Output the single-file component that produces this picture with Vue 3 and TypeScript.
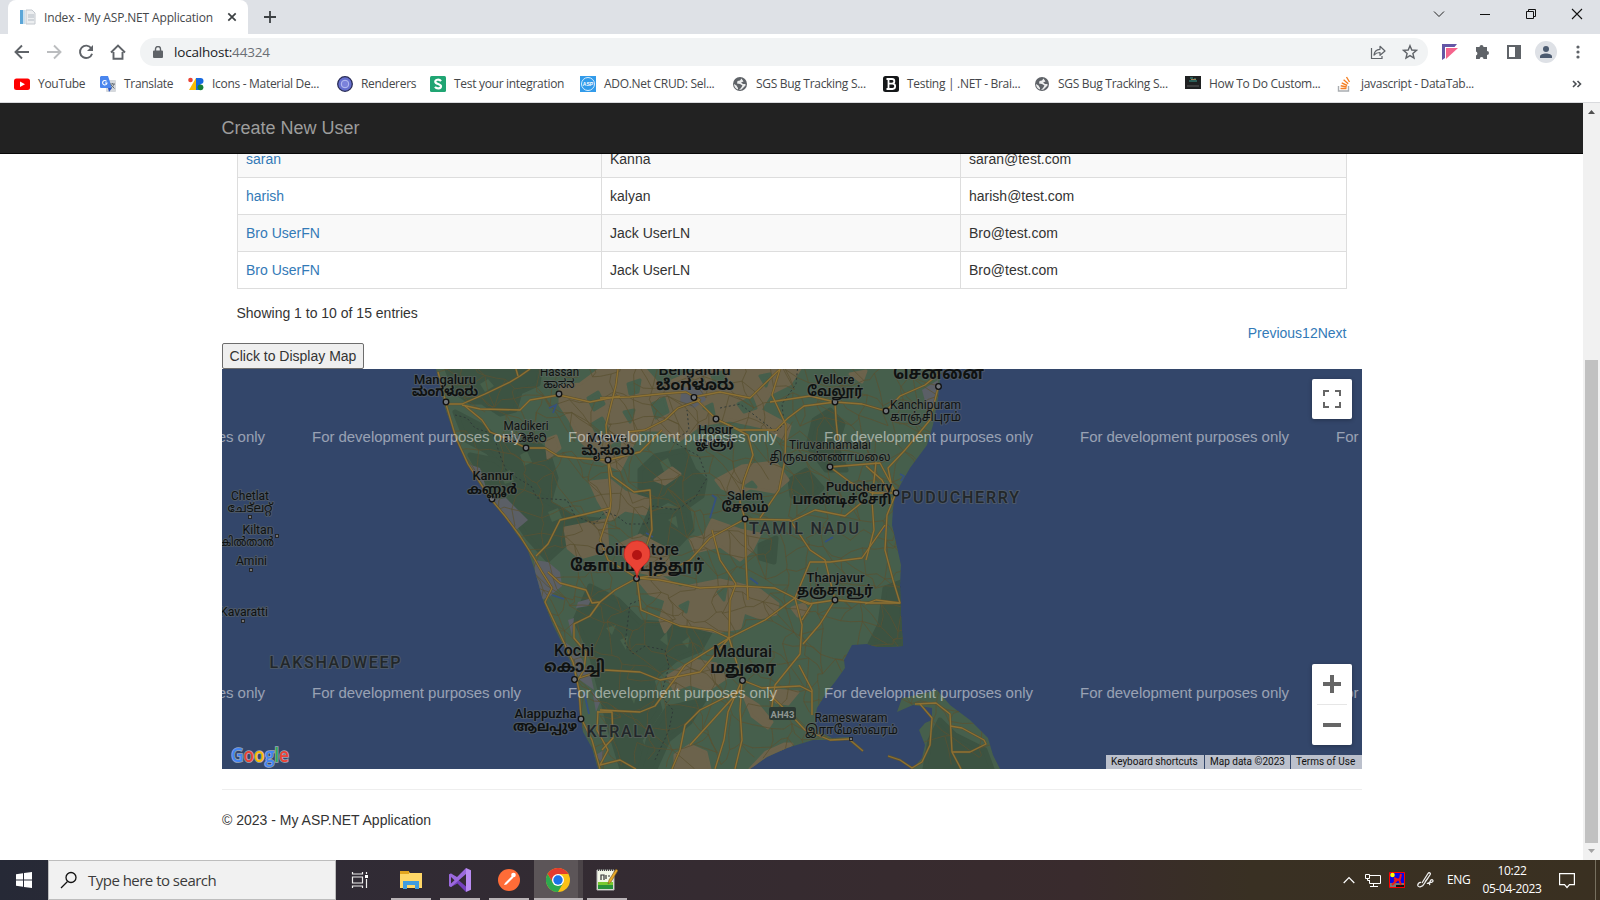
<script setup lang="ts">
interface Bookmark { icon: string; label: string; width: number }
interface Place { name: string; x: number; y: number; w: number; size: number; weight?: number; kind?: string }

const bookmarks: Bookmark[] = [
  { icon: 'youtube', label: 'YouTube', width: 86 },
  { icon: 'translate', label: 'Translate', width: 88 },
  { icon: 'material', label: 'Icons - Material De...', width: 149 },
  { icon: 'renderers', label: 'Renderers', width: 93 },
  { icon: 'sheet', label: 'Test your integration', width: 150 },
  { icon: 'asp', label: 'ADO.Net CRUD: Sel...', width: 152 },
  { icon: 'globe', label: 'SGS Bug Tracking S...', width: 151 },
  { icon: 'brain', label: 'Testing | .NET - Brai...', width: 151 },
  { icon: 'globe', label: 'SGS Bug Tracking S...', width: 151 },
  { icon: 'howto', label: 'How To Do Custom...', width: 152 },
  { icon: 'stack', label: 'javascript - DataTab...', width: 160 },
]

const users = [
  { first: 'saran', last: 'Kanna', email: 'saran@test.com' },
  { first: 'harish', last: 'kalyan', email: 'harish@test.com' },
  { first: 'Bro UserFN', last: 'Jack UserLN', email: 'Bro@test.com' },
  { first: 'Bro UserFN', last: 'Jack UserLN', email: 'Bro@test.com' },
]

const india = '436,369 440,385 444,405 450,422 458,443 468,465 480,485 492,498 503,512 515,532 527,548 534,568 538,582 542,597 545,605 553,625 563,645 573,668 577,682 580,712 583,732 592,748 598,769 750,769 767,757 787,748 813,740 850,740 849,737 832,738 818,731 815,720 817,708 827,692 835,682 845,668 844,660 852,645 867,644 877,647 890,647 903,646 901,615 900,585 901,565 895,538 892,525 893,508 895,495 902,482 910,468 927,445 933,425 938,398 941,369'
const lanka = '912,769 922,758 925,745 919,730 925,723 932,720 932,708 913,705 897,712 902,698 917,695 937,690 950,705 970,720 988,738 993,755 1000,769'

const forests = [
  '447,369 540,369 538,384 520,392 515,410 500,414 482,402 470,402 456,392',
  '455,412 480,425 500,440 530,438 548,452 556,478 550,500 532,492 510,476 488,452 466,440',
  '470,455 495,460 520,480 545,500 575,518 598,520 596,532 570,540 548,560 528,538 505,504 485,482',
  '640,470 655,456 685,450 694,470 705,480 702,496 685,508 668,500 650,510 640,496',
  '650,512 688,510 692,530 678,545 655,548 640,535',
  '590,586 618,600 640,622 668,624 710,632 700,650 675,660 652,680 660,710 640,740 650,769 622,769 610,730 600,690 590,650 575,620',
  '814,420 830,410 843,424 836,446 846,470 826,470 808,446',
  '790,480 806,470 822,488 808,502 792,496',
  '760,545 776,538 774,562 760,558',
  '885,588 901,582 903,646 870,644 880,624',
  '668,708 704,700 690,722 668,740 655,769 640,769 650,734',
  '925,769 930,740 940,720 955,735 985,750 992,769',
]
const clearings = [
  '480,384 488,379 494,386 485,392', '500,420 509,424 504,430', '520,455 527,451 532,462 524,466', '500,474 510,470 514,481 505,484',
  '548,512 558,508 562,518 552,522', '572,526 582,524 580,532', '620,640 628,636 626,650', '660,640 667,632 668,646', '682,642 690,636 688,648',
  '606,628 616,625 612,635', '630,695 638,690 634,704', '600,660 606,672 598,670', '660,462 668,458 672,468 664,472', '668,520 676,516 678,528',
]
const plains = [
  '560,386 580,384 600,369 645,369 660,386 700,369 800,369 790,384 770,394 760,410 790,426 786,440 766,428 730,420 700,425 680,440 660,430 640,430 620,470 600,460 580,440 570,420 560,405',
  '590,482 610,480 625,492 650,500 645,514 625,510 610,520 598,500',
  '546,440 556,436 560,448 548,458', '655,480 672,468 680,474 665,484',
  '716,480 742,466 775,462 788,480 774,492 750,488 738,494 722,488',
  '690,540 704,536 712,520 740,530 760,534 752,550 740,560 720,546 695,552',
  '640,582 660,576 680,588 720,580 738,584 760,590 778,604 776,614 760,618 744,612 740,628 716,632 690,626 672,622 665,632 660,620 666,600 650,594',
  '668,676 694,660 716,664 726,678 708,690 690,684 674,690',
  '775,690 798,692 788,704 776,702', '744,696 758,705 772,722 768,728 752,716',
  '675,769 675,755 690,745 706,752 710,769', '750,769 766,752 784,744 792,744 782,752 762,764',
  '565,528 606,520 608,550 580,558 568,548', '792,608 804,604 808,612 798,616', '618,545 640,535 665,548 672,575 650,574 632,570',
  '850,374 866,371 862,382',
]
const gaps = ['588,398 598,392 604,404 594,410', '628,384 640,380 638,392 630,394', '592,424 602,418 608,430 598,436', '652,404 664,398 668,412 656,418', '712,376 722,372 726,382 716,386', '738,404 752,398 756,408 744,412', '704,408 712,404 714,414', '760,376 770,374 766,386', '624,412 634,410 630,422', '612,446 620,440 618,456', '718,592 726,588 724,600', '746,486 752,482 756,487', '680,606 688,602 686,612', '640,552 648,546 650,556']
const cities = ['534,560 548,562 560,572 562,586 550,596 542,600 536,582', '490,500 506,498 520,512 528,520 516,530 504,514', '562,640 576,650 590,672 594,690 580,680', '682,388 700,384 706,400 694,408 680,402', '922,390 938,380 936,400 928,412', '592,690 600,702 596,712', '468,464 480,468 486,488', '578,602 592,598 588,606 576,608', '568,620 574,618 572,636', '594,756 604,750 602,762']

const highways = [
  '438,372 443,390 446,404 456,438 468,464 490,498 505,516 520,536 534,558 542,572 552,588 545,602 560,634 573,662 579,690 581,718 592,740 600,769',
  '446,404 462,404 485,394 510,382 520,376 530,369', '462,405 480,409 520,410 530,400 559,395 590,402 620,396',
  '465,406 482,420 490,432 510,440 526,448 545,448 558,456 576,458 608,460 640,452 662,430',
  '518,376 516,369', '618,369 616,385 606,425 608,460 611,500 610,510 600,540 608,560 637,578',
  '610,508 586,514 560,520 548,544 536,556', '600,398 630,397 660,394 686,392 700,400 678,408 665,420 645,430 628,432',
  '694,397 720,392 750,398 780,369', '694,397 716,419 748,435 753,455 744,480 740,502 745,519 746,560 748,600',
  '716,419 740,430 776,430 788,418 804,406 835,402 862,404 886,411', '835,402 836,420 838,440', '770,402 810,396 835,402',
  '780,369 772,395 786,425 785,460 779,490 760,518', '886,411 900,396 925,385 941,372', '938,388 930,420 905,450 888,468 893,493',
  '830,467 880,463 896,493', '745,519 790,520 810,550 825,560 835,600', '745,519 710,538 690,560 660,575 637,578',
  '608,460 612,476 634,492 650,490 652,530 645,550 637,578', '830,467 850,482 872,493 896,493', '790,522 815,510 845,516 865,500',
  '896,493 887,515 885,550 893,580 900,603 870,603 835,600 808,604 795,598 775,588 738,586 700,588 660,580 637,578',
  '885,525 862,558 830,562 810,562 795,598 802,625 800,654 775,685 770,720',
  '637,578 641,610 680,626 712,630 729,638 742,680', '729,638 730,600 736,584 720,560 712,530',
  '729,638 765,620 795,598', '800,600 812,604 802,620', '835,600 820,624 803,644', '865,604 876,600 900,603',
  '742,680 762,688 800,686 812,692', '799,665 812,690 812,715', '742,680 728,712 724,740 715,769',
  '742,680 740,710 742,740 735,769', '770,695 790,714 805,730 830,740 850,739',
  '579,678 604,670 640,672 660,680 700,672 729,638', '600,710 640,712 655,706 685,665 729,638', '690,745 740,690',
  '637,578 615,590 600,602 592,603 586,590 560,583 548,572', '600,602 590,616 574,624 574,638 586,652 584,670 578,680',
  '598,711 597,730 608,750 600,765 620,760 636,769', '597,712 612,712 613,738 602,750', '740,690 700,710 685,725 680,750 672,769',
  '915,704 936,703 950,714 952,752 961,769', '950,726 962,728 984,740 986,744 970,752 952,752', '920,704 932,718 930,745 922,762 912,768 900,760 888,756',
  '850,740 863,751', '866,466 882,480 892,500', '876,462 872,500 874,530 866,560',
]

function noise(n: number): number {
  const v = Math.sin(n * 127.1 + 11.7) * 43758.5453
  return v - Math.floor(v)
}
const columns = 30
const rows = 21
const step = 19
function node(c: number, r: number): [number, number] {
  const i = r * columns + c
  return [425 + c * step + (noise(i) - 0.5) * 17, 362 + r * step + (noise(i + 999) - 0.5) * 17]
}
function link(a: [number, number], b: [number, number], s: number): string {
  const mx = (a[0] + b[0]) / 2 + (noise(s) - 0.5) * 7
  const my = (a[1] + b[1]) / 2 + (noise(s + 51) - 0.5) * 7
  return `M${a[0].toFixed(1)} ${a[1].toFixed(1)}L${mx.toFixed(1)} ${my.toFixed(1)}L${b[0].toFixed(1)} ${b[1].toFixed(1)}`
}
let minorRoads = ''
for (let r = 0; r < rows; r++) {
  for (let c = 0; c < columns; c++) {
    const i = r * columns + c
    if (noise(i + 7) > 0.25) minorRoads += link(node(c, r), node(c + 1, r), i)
    if (noise(i + 77) > 0.3) minorRoads += link(node(c, r), node(c, r + 1), i + 300)
    if (noise(i + 777) > 0.65) minorRoads += link(node(c, r), node(c + 1, r + 1), i + 600)
  }
}

const places: Place[] = [
  { name: 'Mangaluru', x: 445, y: 383.5, w: 62, size: 13 }, { name: 'ಮಂಗಳೂರು', x: 445, y: 396, w: 66, size: 13.5, weight: 700 },
  { name: 'Hassan', x: 559.5, y: 376, w: 39, size: 12, weight: 400 }, { name: 'ಹಾಸನ', x: 559, y: 388, w: 31, size: 12.5, weight: 400 },
  { name: 'Madikeri', x: 526, y: 430, w: 45, size: 12, weight: 400 }, { name: 'ಮಡಿಕೇರಿ', x: 525, y: 442, w: 43, size: 12.5, weight: 400 },
  { name: 'Mysuru', x: 607, y: 442, w: 40, size: 13 }, { name: 'ಮೈಸೂರು', x: 608, y: 455, w: 53, size: 13.5, weight: 700 },
  { name: 'Kannur', x: 493, y: 480, w: 41, size: 13 }, { name: 'കണ്ണൂർ', x: 492, y: 493.5, w: 50, size: 13.5, weight: 700 },
  { name: 'Chetlat', x: 250, y: 500, w: 38, size: 12, weight: 400 }, { name: 'ചേട്ലറ്റ്', x: 250, y: 512, w: 45, size: 12.5, weight: 400 },
  { name: 'Kiltan', x: 258, y: 534, w: 31, size: 12, weight: 400 }, { name: 'കിൽതാൻ', x: 247, y: 546, w: 54, size: 12.5, weight: 400 },
  { name: 'Amini', x: 251.5, y: 565, w: 31, size: 12, weight: 400 }, { name: 'Kavaratti', x: 244, y: 616, w: 48, size: 12, weight: 400 },
  { name: 'LAKSHADWEEP', x: 335, y: 667.5, w: 131, size: 16, kind: 'region' },
  { name: 'Bengaluru', x: 694.5, y: 374.5, w: 72, size: 15.5 }, { name: 'ಬೆಂಗಳೂರು', x: 695, y: 390, w: 78, size: 15.5, weight: 700 },
  { name: 'Hosur', x: 715.5, y: 433.5, w: 35, size: 13 }, { name: 'ஓசூர்', x: 715, y: 447, w: 40, size: 13.5, weight: 700 },
  { name: 'Vellore', x: 834.5, y: 383.5, w: 40, size: 13 }, { name: 'வேலூர்', x: 835, y: 396, w: 56, size: 13.5, weight: 700 },
  { name: 'சென்னை', x: 938.5, y: 379, w: 91, size: 17, weight: 700 },
  { name: 'Kanchipuram', x: 925.5, y: 409, w: 71, size: 12, weight: 400 }, { name: 'காஞ்சிபுரம்', x: 925.5, y: 421, w: 71, size: 12.5, weight: 400 },
  { name: 'Tiruvannamalai', x: 830, y: 449, w: 82, size: 12, weight: 400 }, { name: 'திருவண்ணாமலை', x: 830, y: 461, w: 121, size: 12.5, weight: 400 },
  { name: 'Puducherry', x: 859, y: 491, w: 66, size: 13 }, { name: 'பாண்டிச்சேரி', x: 842, y: 504, w: 99, size: 13.5, weight: 700 },
  { name: 'PUDUCHERRY', x: 960, y: 502.5, w: 118, size: 16, kind: 'region' },
  { name: 'Salem', x: 745, y: 499.500, w: 36, size: 13 }, { name: 'சேலம்', x: 745, y: 512, w: 47, size: 13.5, weight: 700 },
  { name: 'TAMIL NADU', x: 804, y: 533.5, w: 110, size: 16, kind: 'region' },
  { name: 'Coimbatore', x: 637, y: 555, w: 84, size: 16 }, { name: 'கோயம்புத்தூர்', x: 637, y: 571, w: 134, size: 16.5, weight: 700 },
  { name: 'Kochi', x: 574, y: 656, w: 40, size: 16 }, { name: 'കൊച്ചി', x: 574.5, y: 672, w: 61, size: 16.5, weight: 700 },
  { name: 'Alappuzha', x: 545.5, y: 717.5, w: 62, size: 13 }, { name: 'ആലപ്പുഴ', x: 545, y: 731, w: 64, size: 13.5, weight: 700 },
  { name: 'KERALA', x: 620.5, y: 737, w: 68, size: 16, kind: 'region' },
  { name: 'Thanjavur', x: 835.5, y: 581.5, w: 58, size: 13 }, { name: 'தஞ்சாவூர்', x: 835, y: 595, w: 76, size: 13.5, weight: 700 },
  { name: 'Madurai', x: 742.5, y: 657, w: 59, size: 16 }, { name: 'மதுரை', x: 743, y: 673, w: 66, size: 16.5, weight: 700 },
  { name: 'Rameswaram', x: 851, y: 722, w: 73, size: 12, weight: 400 }, { name: 'இராமேஸ்வரம்', x: 851.5, y: 734, w: 93, size: 12.5, weight: 400 },
]
const dots = [[446, 402], [559, 394], [526, 448], [608, 460], [492, 499], [694, 397.5], [716, 419], [835, 402], [938.5, 386.5], [886, 411], [830, 467], [896, 493], [745, 519], [636.5, 578.5], [574.5, 679.5], [581, 719], [835, 600], [742.5, 680.5]]
const islets = [[250, 517], [277, 536], [251, 570], [243, 621], [851, 739]]
const watermarks = [436, 692].flatMap((y) => [56, 312, 568, 824, 1080, 1336].map((x) => ({ x, y: y + 5.5 })))
</script>

<template>
  <div class="screen">
    <header class="tabs">
      <div class="tab">
        <svg class="favicon" width="16" height="16" viewBox="0 0 16 16"><path d="M0 1h3v14H0z" fill="#5ba6d8" /><path d="M3 1h2v14H3z" fill="#c9dfee" /><path d="M6 1h6l3 3v11H6z" fill="#eceef0" stroke="#c3c8ce" /><path d="M8 6h6M8 8h6M8 11h6" stroke="#b4bcc5" /></svg>
        <span class="tab-title">Index - My ASP.NET Application</span>
        <svg class="tab-close" width="10" height="10" viewBox="0 0 10 10"><path d="M1.3 1.3l7.4 7.4M8.7 1.3L1.3 8.7" stroke="#3c4043" stroke-width="1.7" /></svg>
      </div>
      <svg class="new-tab" width="12" height="12" viewBox="0 0 12 12"><path d="M6 0v12M0 6h12" stroke="#3c4043" stroke-width="1.8" /></svg>
      <div class="window-buttons">
        <svg width="12" height="12" viewBox="0 0 12 12"><path d="M1 3.5l5 5 5-5" fill="none" stroke="#222" /></svg>
        <svg width="12" height="12" viewBox="0 0 12 12"><path d="M1 6.5h10" stroke="#111" /></svg>
        <svg width="12" height="12" viewBox="0 0 12 12"><path d="M1.5 3.5h7v7h-7zM3.5 3V1.5h7v7H9" fill="none" stroke="#111" /></svg>
        <svg width="12" height="12" viewBox="0 0 12 12"><path d="M1 1l10 10M11 1L1 11" stroke="#111" stroke-width="1.1" /></svg>
      </div>
    </header>

    <div class="toolbar">
      <div class="nav-icons">
        <svg width="16" height="16" viewBox="0 0 16 16"><path d="M15 8H2M8 1.5L1.5 8 8 14.5" class="line dark" /></svg>
        <svg width="16" height="16" viewBox="0 0 16 16"><path d="M1 8h13M8 1.5L14.5 8 8 14.5" class="line light" /></svg>
        <svg width="16" height="16" viewBox="0 0 16 16"><path d="M13.3 4.3A6.2 6.2 0 1 0 14.1 9.8" class="line dark" /><path d="M15 1v6H9z" fill="#5f6368" /></svg>
        <svg width="16" height="16" viewBox="0 0 16 16"><path d="M1 8.5L8 1.5l7 7M3.5 8v6.700h9V8" class="line dark" /></svg>
      </div>
      <div class="omnibox">
        <svg width="10" height="12" viewBox="0 0 10 12"><path d="M1 4.5h8a1 1 0 0 1 1 1V11a1 1 0 0 1-1 1H1a1 1 0 0 1-1-1V5.500a1 1 0 0 1 1-1z" fill="#5f6368" /><path d="M2.500 5V3a2.500 2.500 0 0 1 5 0v2" fill="none" stroke="#5f6368" stroke-width="1.400" /></svg>
        <span class="url">localhost:<span class="port">44324</span></span>
        <svg class="share" width="16" height="16" viewBox="0 0 16 16"><path d="M1.500 4v10.500H12V12" fill="none" stroke="#5f6368" stroke-width="1.200" /><path d="M4 11c.3-3.500 2.500-5.500 6-5.700V2.300L15 7l-5 4.300V8.500c-2.700 0-4.500.8-6 2.500z" fill="none" stroke="#5f6368" stroke-width="1.200" stroke-linejoin="round" /></svg>
        <svg width="16" height="16" viewBox="0 0 16 16"><path d="M8 1.700l1.800 4.300 4.700.4-3.600 3 1.100 4.600L8 11.600 4 14l1.100-4.600-3.600-3L6.200 6z" fill="none" stroke="#5f6368" stroke-width="1.400" stroke-linejoin="miter" /></svg>
      </div>
      <div class="extensions">
        <svg width="16" height="16" viewBox="0 0 16 16"><path d="M0 0h15l-2.500 3H3v11l-3 2z" fill="#6457a6" /><path d="M4 4h12L4 15z" fill="#f5648c" /></svg>
        <svg width="16" height="16" viewBox="0 0 16 16"><path d="M5.500 3a2 2 0 0 1 4 0H13v4a2 2 0 0 1 0 4v4H9.500a1.900 1.900 0 0 0-3.800 0H2v-3.600a2 2 0 0 0 0-3.800V3z" fill="#5f6368" /></svg>
        <svg width="16" height="16" viewBox="0 0 16 16"><path d="M1 1h14v14H1zM3 3v10h6V3z" fill="#5f6368" fill-rule="evenodd" /></svg>
        <svg class="avatar" width="22" height="22" viewBox="0 0 22 22"><circle cx="11" cy="11" r="11" fill="#dee1e6" /><circle cx="11" cy="8" r="3" fill="#4c5b70" /><path d="M5 17v-1.500c0-4 12-4 12 0V17z" fill="#4c5b70" /></svg>
        <svg class="menu-dots" width="4" height="16" viewBox="0 0 4 16"><g fill="#5f6368"><circle cx="2" cy="3" r="1.600" /><circle cx="2" cy="8" r="1.600" /><circle cx="2" cy="13" r="1.600" /></g></svg>
      </div>
    </div>

    <nav class="bookmarks">
      <div v-for="(b, i) in bookmarks" :key="i" class="bookmark" :style="{ width: b.width + 'px' }">
        <svg width="16" height="16" viewBox="0 0 16 16">
          <template v-if="b.icon === 'youtube'"><rect y="2.500" width="16" height="11.500" rx="2.500" fill="#f00" /><path d="M6 5.500v5.500l5-2.750z" fill="#fff" /></template>
          <template v-else-if="b.icon === 'translate'"><rect x="6" y="4" width="10" height="12" rx="1" fill="#d5d8dc" /><path d="M1 0h7l4 12H1a1 1 0 0 1-1-1V1z" fill="#4a86ee" /><path d="M8 12h4l-3 4z" fill="#2c56c4" /><path d="M6.500 5.300A2.200 2.200 0 1 0 7 7H5" fill="none" stroke="#fff" stroke-width="1.100" /><path d="M10 8h5M12.500 7v1M14 8c-.5 2-2 3.500-3 4M11 9l3.500 3.500" stroke="#687078" fill="none" /></template>
          <template v-else-if="b.icon === 'material'"><path d="M1 14L8 2v12z" fill="#fbbc04" /><circle cx="2.500" cy="4" r="2.300" fill="#ea4335" /><path d="M8 2h4.500a3 3 0 0 1 0 6v6H8z" fill="#1769e0" /><circle cx="12.500" cy="11.300" r="2.900" fill="#188038" /></template>
          <template v-else-if="b.icon === 'renderers'"><circle cx="8" cy="8" r="7.300" fill="#6670cf" stroke="#292c56" stroke-width="1.300" /><circle cx="8" cy="8" r="3.800" fill="#7b82db" stroke="#bac0f2" /></template>
          <template v-else-if="b.icon === 'sheet'"><rect width="16" height="16" rx="1.500" fill="#20a573" /><path d="M11 5.200C9.500 3 5.300 3.300 5.300 5.700c0 2.800 5.700 1.800 5.700 4.600 0 2.600-4.400 2.800-6 .6" fill="none" stroke="#fff" stroke-width="2.200" /></template>
          <template v-else-if="b.icon === 'asp'"><rect width="16" height="16" fill="#329bea" /><circle cx="8" cy="8" r="6.500" fill="none" stroke="#d8efff" /><text x="8" y="10.200" class="asp">ASP</text></template>
          <template v-else-if="b.icon === 'globe'"><circle cx="8" cy="8" r="7" fill="#5f6368" /><path d="M9.500 2.500L8 4.500l-2.500.5L5 7.500l3 .5 2.500 1.500L9 12l-2 2 2.500-.5 4-4V8H11L9 6.500l2.500-1z" fill="#eceded" /><path d="M2 8l2.500 1.500L6 12v1.500C3.500 13 2 10.500 2 8z" fill="#eceded" /></template>
          <template v-else-if="b.icon === 'brain'"><rect width="16" height="16" rx="2.500" fill="#151719" /><path d="M5 3h4a2.300 2.300 0 0 1 0 4.700H5.500 9.500a2.600 2.600 0 0 1 0 5.300H5M5.500 3v10M3.500 3h3M3.500 13h3" fill="none" stroke="#fff" stroke-width="1.800" /></template>
          <template v-else-if="b.icon === 'howto'"><rect y="0" width="16" height="13" fill="#1f2122" /><path d="M5 2h3M9 3h2M4 5h8" stroke="#3a9e8f" /><path d="M6 3.500h5" stroke="#9a8052" /><path d="M2 10h12" stroke="#777" stroke-width=".7" /></template>
          <template v-else><path d="M1.500 10v5h10v-5" fill="none" stroke="#a9adb1" stroke-width="1.400" /><path d="M3.500 12.500h6M3.700 9.700l6 1.300M4.700 6.800l5.500 2.700M6.600 3.700l4.600 4M9.500 1l3 5" stroke="#f48024" stroke-width="1.400" /></template>
        </svg>
        <span>{{ b.label }}</span>
      </div>
      <svg class="more" width="10" height="8" viewBox="0 0 10 8"><path d="M1 1l3 3-3 3M5.500 1l3 3-3 3" fill="none" stroke="#4b4f54" stroke-width="1.600" /></svg>
    </nav>

    <div class="viewport">
      <main class="page">
        <div class="navbar"><a class="brand">Create New User</a></div>
        <div class="container">
          <div class="grid-wrap">
            <table class="users">
              <colgroup><col class="c1" /><col class="c2" /><col /></colgroup>
              <tbody>
                <tr v-for="(u, i) in users" :key="i"><td><a>{{ u.first }}</a></td><td>{{ u.last }}</td><td>{{ u.email }}</td></tr>
              </tbody>
            </table>
            <div class="info">Showing 1 to 10 of 15 entries</div>
            <div class="paging"><a>Previous</a><a>1</a><a>2</a><a>Next</a></div>
          </div>
          <button class="map-button">Click to Display Map</button>
          <div class="map">
            <svg width="1140" height="400" viewBox="222 369 1140 400">
              <defs><clipPath id="land"><polygon :points="india" /><polygon :points="lanka" /></clipPath></defs>
              <rect x="222" y="369" width="1140" height="400" fill="#33466a" />
              <g clip-path="url(#land)">
                <rect x="420" y="369" width="600" height="400" fill="#465f4c" />
                <polygon v-for="(p, i) in forests" :key="'f' + i" :points="p" fill="#3c5342" stroke="#3c5342" stroke-width="5" stroke-linejoin="round" />
                <polygon v-for="(p, i) in clearings" :key="'k' + i" :points="p" fill="#47604a" />
                <polygon v-for="(p, i) in plains" :key="'p' + i" :points="p" fill="#6c634c" stroke="#6c634c" stroke-width="3" stroke-linejoin="round" />
                <polygon v-for="(p, i) in gaps" :key="'q' + i" :points="p" fill="#465f4c" stroke="#465f4c" stroke-width="3" stroke-linejoin="round" />
                <polygon v-for="(p, i) in cities" :key="'c' + i" :points="p" fill="#5b5f66" />
                <path :d="minorRoads" fill="none" stroke="#5b5132" stroke-width=".9" opacity=".85" />
                <path d="M455 415l12 3 8 10 18 6 8 24 6 14 24 14 6 12 30 2 8 16 20 8 10-12 12 4 10 8h20l6-18 24 4 18-12 12-20-8-22-26-14 16-12-2-20M720 408l20-4 18 14 18 14 8-8-2-20 14-20 2-20M640 600l-10 4-5 40 8 10 12-8 20 4 4 16-8 30 12 14-4 20-14 30" fill="none" stroke="#303a38" stroke-dasharray="2 2.500" />
                <path d="M549 408l7-3-3 8M712 495l4 3-6 20M900 474l4 2-3 5M880 532l8-6M825 542l8-5M646 533l7 4M552 595l12 4M584 692l5 22M750 578l8 6" fill="none" stroke="#35517e" stroke-width="1.800" />
              </g>
              <g fill="none" stroke-linejoin="round"><polyline v-for="(p, i) in highways" :key="'h' + i" :points="p" stroke="#5d5230" stroke-width="2.400" /><polyline v-for="(p, i) in highways" :key="'g' + i" :points="p" stroke="#8d7133" stroke-width="1.300" /></g>
              <g fill="#73777b" stroke="#111" stroke-width="1.300"><circle v-for="(d, i) in dots" :key="i" :cx="d[0]" :cy="d[1]" r="2.800" /></g>
              <g fill="#777" stroke="#222" stroke-width=".9"><rect v-for="(d, i) in islets" :key="i" :x="d[0] - 1.500" :y="d[1] - 1.500" width="3" height="3" /></g>
              <rect x="769" y="707" width="27" height="13" rx="2" fill="#2c3933" /><text x="782.500" y="717.500" class="shield">AH43</text>
              <text v-for="(p, i) in places" :key="'t' + i" class="place" :class="p.kind" :x="p.x - p.w / 2" :y="p.y" :font-size="p.size" :font-weight="p.weight ?? 500" :textLength="p.w" :lengthAdjust="p.kind ? 'spacing' : 'spacingAndGlyphs'">{{ p.name }}</text>
              <text v-for="(w, i) in watermarks" :key="'w' + i" class="watermark" :x="w.x" :y="w.y" textLength="209">For development purposes only</text>
              <path d="M637 578c-1-8-4-10-8-14a13 13 0 1 1 16 0c-4 4-7 6-8 14z" fill="#ea4335" stroke="#c5221f" stroke-width=".7" /><circle cx="637" cy="555" r="5" fill="#b31412" />
              <text class="google" x="231" y="762" textLength="58" lengthAdjust="spacingAndGlyphs"><tspan fill="#4285f4">G</tspan><tspan fill="#ea4335">o</tspan><tspan fill="#fbbc04">o</tspan><tspan fill="#4285f4">g</tspan><tspan fill="#34a853">l</tspan><tspan fill="#ea4335">e</tspan></text>
            </svg>
            <div class="fullscreen"><svg width="18" height="18" viewBox="0 0 18 18"><path d="M1 6V1h5M12 1h5v5M17 12v5h-5M6 17H1v-5" fill="none" stroke="#666" stroke-width="2" /></svg></div>
            <div class="zoom">
              <svg width="18" height="18" viewBox="0 0 18 18"><path d="M9 0v18M0 9h18" stroke="#666" stroke-width="4" /></svg>
              <i></i>
              <svg width="18" height="18" viewBox="0 0 18 18"><path d="M0 9h18" stroke="#666" stroke-width="4" /></svg>
            </div>
            <div class="legal"><span class="l1">Keyboard shortcuts</span><span class="l2">Map data ©2023</span><span class="l3">Terms of Use</span></div>
          </div>
          <hr />
          <footer>© 2023 - My ASP.NET Application</footer>
        </div>
      </main>
      <div class="scrollbar">
        <svg width="17" height="17" viewBox="0 0 17 17"><path d="M5 11l3.500-4 3.500 4z" fill="#505050" /></svg>
        <div class="thumb"></div>
        <svg width="17" height="17" viewBox="0 0 17 17"><path d="M5 6l3.500 4L12 6z" fill="#a3a3a3" /></svg>
      </div>
    </div>

    <div class="taskbar">
      <div class="start"><svg width="16" height="16" viewBox="0 0 16 16"><path d="M0 2.300l7-1v6.200H0zM8 1.100L16 0v7.500H8zM0 8.500h7v6.200l-7-1zM8 8.500h8V16l-8-1.100z" fill="#fff" /></svg></div>
      <div class="search"><svg width="18" height="18" viewBox="0 0 18 18"><circle cx="11" cy="6.500" r="5" fill="none" stroke="#111" stroke-width="1.300" /><path d="M7.500 10.500L1 17" stroke="#111" stroke-width="1.300" /></svg><span>Type here to search</span></div>
      <div class="app plain"><svg width="18" height="18" viewBox="0 0 18 18" fill="none" stroke="#eee" stroke-width="1.200"><path d="M1.500 1v2h10V1M1.500 6h10v6h-10zM1.500 17v-2h10v2M15.500 1v2M15.500 8v9" /><path d="M14 4h3v3h-3z" fill="#fff" stroke="none" /></svg></div>
      <div class="app"><svg width="22" height="20" viewBox="0 0 22 20"><path d="M0 1h8l2 2h12v15H0z" fill="#ffd767" /><path d="M0 1h9v3H0z" fill="#e3a51f" /><path d="M3 19v-8h16v8h-4v-4H7v4z" fill="#3f9ce0" /></svg></div>
      <div class="app"><svg width="24" height="24" viewBox="0 0 24 24"><path d="M1 6.500l2-1L18 18.500V24L9.500 15.500 3 19l-2-1z" fill="#7440bd" /><path d="M1 18l2 1L18 6V0L9 9 3 5.500l-2 1z" fill="#9b69dd" /><path d="M18 0l5 2.200v19.600L18 24z" fill="#b98cf2" /><path d="M3 9v6.500l3.500-3.300zM18 7.500v9l-5.800-4.500z" fill="#342b34" /></svg></div>
      <div class="app"><svg width="22" height="22" viewBox="0 0 22 22"><circle cx="11" cy="11" r="11" fill="#ff6c37" /><path d="M6 16l1-2 7-7 1.500 1.500-7 7z" fill="#fff" /><circle cx="15.500" cy="6" r="2.300" fill="#fff" /></svg></div>
      <div class="app active"><svg width="24" height="24" viewBox="0 0 24 24"><circle cx="12" cy="12" r="12" fill="#fbc116" /><path d="M12 6h10.400A12 12 0 0 0 1.600 6L7 15z" fill="#e33b2e" /><path d="M1.600 6A12 12 0 0 0 12 24l5.200-9H7z" fill="#2da94f" /><circle cx="12" cy="12" r="6" fill="#fff" /><circle cx="12" cy="12" r="4.700" fill="#1a73e8" /></svg></div>
      <div class="app"><svg width="22" height="24" viewBox="0 0 22 24"><path d="M1 2h17v20H1z" fill="#f3f7e8" stroke="#b8b8b8" /><path d="M2 14h15v7H2z" fill="#78c92f" /><path d="M2 17h15v4H2z" fill="#27913a" /><path d="M5 12V7h3v5M10 7v4M12 8h2" fill="none" stroke="#333" stroke-width="1.200" /><path d="M2 2h15" stroke="#444" stroke-dasharray="1 1" stroke-width="2" /><path d="M12 16l1-4L20 1l2 1.500L15 14z" fill="#e8a92b" stroke="#70561c" stroke-width=".6" /></svg></div>
      <div class="tray">
        <svg width="12" height="8" viewBox="0 0 12 8"><path d="M.7 7L6 1.500 11.300 7" fill="none" stroke="#fff" stroke-width="1.200" /></svg>
        <svg class="net" width="16" height="14" viewBox="0 0 16 14"><path d="M5 2.500h10.500v8H4.500V7M8.500 11v2M5 13.500h8M.5 1.500h4v4h-4zM2.500 5v2.500H5" fill="none" stroke="#fff" /></svg>
        <svg class="red" width="16" height="16" viewBox="0 0 16 16"><path d="M.5.5h15v15H.5z" fill="#0909e8" stroke="#f00" /><path d="M1 11h14v4H1z" fill="#777" /><path d="M7 15h8v-2H7z" fill="#111" /><circle cx="3.500" cy="3" r="2.300" fill="#ff0" /><path d="M12 2l-1 5-6 2M10 7l2 6M9 7l-6 6M5 6l4 2" fill="none" stroke="#f01818" stroke-width="2" /></svg>
        <svg class="pen" width="17" height="16" viewBox="0 0 17 16"><path d="M5 11L11 1.500c1-1.500 3-.5 2.200 1L7 12c-1.500 3-5 3.500-6 2-.8-1.500 1-4 3-3.500M8 10l3-4M10 11c1 1 2 0 3-1 1 1 3 0 3-1s-1-2-2-1-2 4-1 5" fill="none" stroke="#eee" stroke-width="1.300" /></svg>
        <span class="lang">ENG</span>
        <div class="clock"><span>10:22</span><span>05-04-2023</span></div>
        <svg class="notice" width="16" height="16" viewBox="0 0 16 16"><path d="M.6.6h14.800v11H10.500L8 14.500 5.500 11.600H.6z" fill="none" stroke="#fff" stroke-width="1.200" /></svg>
        <div class="peek"></div>
      </div>
    </div>
  </div>
</template>

<style>
body { margin: 0; overflow: hidden; }
</style>

<style scoped>
.screen { width: 1600px; height: 900px; display: flex; flex-direction: column; background: #fff; font-family: "Open Sans", "Noto Sans", sans-serif; overflow: hidden; }
svg { display: block; flex: none; }
.tabs { height: 34px; background: #dee1e6; display: flex; padding-left: 8px; }
.tab { width: 240px; box-sizing: border-box; height: 34px; padding-left: 12px; background: #fff; border-radius: 8px 8px 0 0; display: flex; align-items: center; font-size: 12px; color: #45474a; }
.tab-title { width: 184px; margin-left: 8px; white-space: nowrap; letter-spacing: -0.16px; }
.tab-close { margin-left: -1px; }
.new-tab { margin: 11px 0 0 16px; }
.window-buttons { margin-left: auto; display: flex; gap: 34px; padding: 8px 17px 0 0; }
.toolbar { height: 35px; display: flex; align-items: center; }
.nav-icons { display: flex; gap: 16px; padding-left: 14px; }
.line { fill: none; stroke-width: 1.9; }
.dark { stroke: #5f6368; }
.light { stroke: #bbbdbf; }
.omnibox { width: 1288px; height: 28px; box-sizing: border-box; margin: 1px 0 0 14px; border-radius: 14px; background: #f1f3f4; display: flex; align-items: center; padding: 0 10px 0 13px; }
.url { margin-left: 11px; font-size: 13.5px; color: #202124; letter-spacing: -0.2px; }
.port { color: #6b6f74; }
.share { margin-left: auto; margin-right: 16px; }
.extensions { display: flex; align-items: center; gap: 16px; padding-left: 14px; }
.avatar { margin: 0 -3px; }
.menu-dots { margin-left: 6px; }
.bookmarks { height: 33px; border-bottom: 1px solid #d9dadd; display: flex; align-items: center; padding-left: 14px; font-size: 12px; color: #45474a; }
.bookmark { display: flex; gap: 8px; align-items: center; white-space: nowrap; flex: none; letter-spacing: -0.3px; padding-bottom: 3px; }
.bookmark span { position: relative; top: -1px; }
.asp { font: 700 5px "Liberation Sans", sans-serif; fill: #fff; text-anchor: middle; letter-spacing: 0; }
.more { margin-left: 75px; margin-bottom: 3px; }
.viewport { height: 757px; display: flex; overflow: hidden; }
.page { width: 1583px; font: 14px/20px "Liberation Sans", Arial, sans-serif; color: #333; }
.navbar { height: 50px; background: #222; border-bottom: 1px solid #080808; padding-left: 221.5px; position: relative; z-index: 2; }
.brand { font-size: 18px; line-height: 50px; color: #9d9d9d; }
.container { width: 1140px; margin-left: 222px; margin-top: -14px; }
.grid-wrap { padding: 0 15px; height: 203px; }
.users { width: 1110px; height: 149px; border-collapse: collapse; table-layout: fixed; }
.c1 { width: 364px; }
.c2 { width: 359px; }
.users td { border: 1px solid #ddd; height: 20px; padding: 8px; }
.users tr:nth-child(odd) { background: #f9f9f9; }
.users a, .paging a { color: #337ab7; }
.info { padding-top: 14px; margin-left: -0.5px; }
.paging { display: flex; justify-content: flex-end; margin-right: 0.5px; }
.map-button { display: block; height: 26px; width: 142px; box-sizing: border-box; padding: 0; border: 1px solid #6d6d6d; border-radius: 2px; background: #efefef; font: 14px "Liberation Sans", sans-serif; color: #333; }
.map { height: 400px; position: relative; overflow: hidden; }
.place { font-family: Roboto, "Noto Sans", "Noto Sans Tamil", "Noto Sans Malayalam", "Noto Sans Kannada", sans-serif; fill: #0f1211; stroke: rgba(98, 102, 102, 0.55); stroke-width: 2px; stroke-linejoin: round; paint-order: stroke; }
.region { fill: #22272a; }
.shield { font: 700 9.5px Roboto, sans-serif; fill: #8f9692; text-anchor: middle; }
.watermark { font: 15px "Liberation Sans", Arial, sans-serif; fill: rgba(255, 255, 255, 0.5); }
.google { font: 600 19px "Open Sans", sans-serif; stroke: rgba(225, 232, 240, 0.6); stroke-width: 1.6px; paint-order: stroke; }
.fullscreen, .zoom { position: absolute; right: 10px; width: 40px; background: #fff; border-radius: 2px; box-shadow: 0 1px 4px rgba(0, 0, 0, 0.3); display: flex; align-items: center; justify-content: center; }
.fullscreen { top: 10px; height: 40px; }
.zoom { bottom: 24px; height: 81px; flex-direction: column; gap: 11px; }
.zoom i { width: 30px; height: 1px; background: #e6e6e6; }
.legal { position: absolute; right: 0; bottom: 0; display: flex; gap: 1px; height: 14px; font: 10px/14px Roboto, sans-serif; color: #111; }
.legal span { background: #bbc0cc; box-sizing: border-box; padding-left: 5px; }
.l1 { width: 98px; }
.l2 { width: 85px; }
.l3 { width: 71px; }
hr { border: 0; border-top: 1px solid #eee; margin: 20px 0; }
.scrollbar { width: 17px; background: #f1f1f1; display: flex; flex-direction: column; align-items: center; }
.thumb { width: 13px; height: 483px; margin-top: 240px; background: #c1c1c1; }
.taskbar { height: 40px; display: flex; background: linear-gradient(90deg, #262936 0, #302b35 330px, #352b31 700px, #392b2d 1080px, #393023 1250px, #3a3021 1600px); color: #fff; }
.start { width: 48px; display: flex; align-items: center; justify-content: center; }
.search { width: 288px; box-sizing: border-box; border: 1px solid #bdbdbd; background: #f1f1f1; display: flex; align-items: center; padding-left: 11px; color: #3b3b3b; font-size: 15px; letter-spacing: -0.52px; }
.search span { margin-left: 10px; }
.app { width: 49px; box-sizing: border-box; display: flex; align-items: center; justify-content: center; position: relative; padding-right: 2px; }
.plain { margin-right: 2px; }
.app:not(.plain)::after { content: ""; position: absolute; left: 4px; right: 5px; bottom: 0; height: 2px; background: #b9b3b6; }
.app.active { background: linear-gradient(90deg, #5c5558 44px, #4a4347 44px); }
.app.active::after { left: 0; right: 0; }
.tray { margin-left: auto; display: flex; align-items: center; height: 40px; font-size: 12px; letter-spacing: -0.35px; }
.net { margin-left: 10px; }
.red { margin-left: 8px; }
.pen { margin-left: 12px; }
.lang { margin-left: 13px; width: 23px; position: relative; top: -1px; }
.clock { margin-left: 12px; width: 60px; display: flex; flex-direction: column; align-items: center; line-height: 18px; padding-bottom: 1px; }
.notice { margin-left: 17px; margin-top: 2px; }
.peek { width: 4px; height: 40px; margin-left: 20px; border-left: 1px solid #77705f; }
</style>
